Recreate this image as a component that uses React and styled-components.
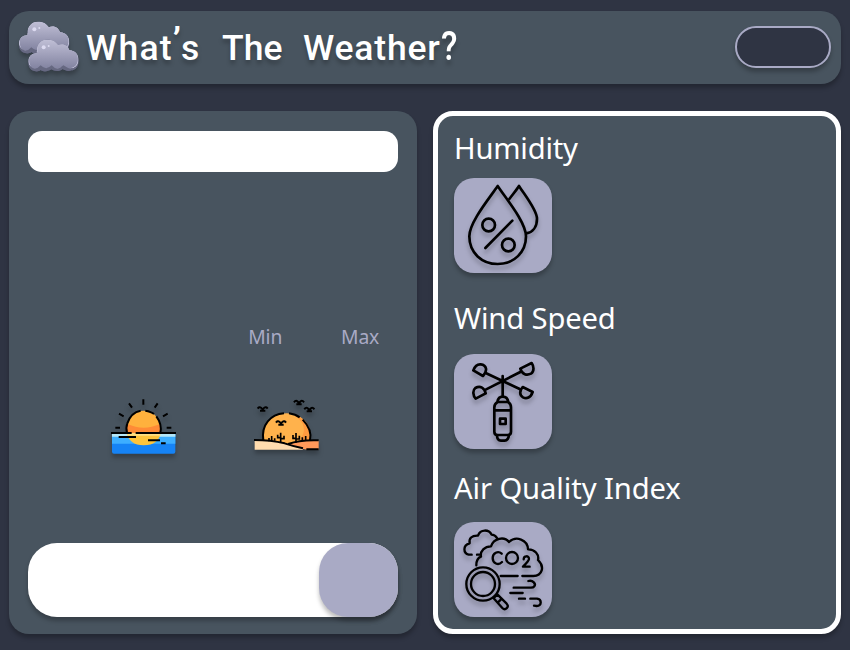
import React from "react";
import styled, { createGlobalStyle } from "styled-components";

const GlobalStyle = createGlobalStyle`
  * { box-sizing: border-box; }
  body { margin: 0; background: #2f3443; font-family: "Noto Sans", "Open Sans", sans-serif; }
`;

const Page = styled.div`
  width: 850px;
  height: 650px;
  padding: 11px 9px 16px;
  display: flex;
  flex-direction: column;
  gap: 27px;
  overflow: hidden;
`;

const Header = styled.header`
  height: 73px;
  flex: none;
  display: flex;
  align-items: center;
  padding: 0 10px 0 9px;
  border-radius: 20px;
  background: #48545f;
  box-shadow: 0 4px 4px rgba(0, 0, 0, 0.25);
`;

const Art = styled.svg`
  display: block;
  flex: none;
  overflow: visible;
  filter: drop-shadow(0 4px 2px rgba(0, 0, 0, 0.25));
`;

const Title = styled.h1`
  margin: 0 auto 0 6px;
  display: flex;
  gap: 20px;
  font: 500 35.5px/44px Roboto, "Liberation Sans", sans-serif;
  color: #fff;
  text-shadow: 0 4px 4px rgba(0, 0, 0, 0.25);
`;

const Word = styled.span`
  width: ${(p) => p.$width}px;
  letter-spacing: ${(p) => p.$spacing}px;
  white-space: nowrap;
`;

const Apostrophe = styled.span`
  vertical-align: 8px;
  line-height: 0;
  font-weight: 700;
  letter-spacing: 0;
`;

const QuestionMark = styled.span`
  display: inline-block;
  line-height: 1;
  transform: scale(0.95, 1.17);
  transform-origin: 0 82%;
`;

const Toggle = styled.button`
  width: 96px;
  height: 42px;
  margin-bottom: 1px;
  padding: 0;
  border: 2px solid #a9aac5;
  border-radius: 21px;
  background: #2f3443;
  box-shadow: 0 4px 4px rgba(0, 0, 0, 0.25);
`;

const Columns = styled.main`
  display: grid;
  grid-template-columns: 1fr 1fr;
  gap: 16px;
  height: 523px;
`;

const Panel = styled.section`
  display: flex;
  flex-direction: column;
  border-radius: 20px;
  background: #48545f;
  box-shadow: 0 4px 4px rgba(0, 0, 0, 0.25);
`;

const ForecastPanel = styled(Panel)`
  padding: 20px 19px 17px;
`;

const MetricsPanel = styled(Panel)`
  border: 5px solid #fff;
  padding: 12px 16px;
`;

const Place = styled.div`
  height: 41px;
  border-radius: 14px;
  background: #fff;
`;

const Range = styled.div`
  display: flex;
  justify-content: flex-end;
  gap: 59px;
  margin-top: 151px;
  padding-right: 19px;
  font-size: 19.3px;
  line-height: 28px;
  letter-spacing: -0.2px;
  color: #a9aac5;
`;

const SunTimes = styled.div`
  display: flex;
  gap: 78px;
  margin: 48px 0 auto 83px;
`;

const Search = styled.div`
  height: 74px;
  display: flex;
  justify-content: flex-end;
  border-radius: 29px;
  background: #fff;
  box-shadow: 0 4px 4px rgba(0, 0, 0, 0.25);
`;

const SearchButton = styled.button`
  width: 79px;
  border: 0;
  border-radius: 29px;
  background: #a9aac5;
  box-shadow: 0 4px 4px rgba(0, 0, 0, 0.25);
`;

const Metric = styled.div`
  height: ${(p) => p.$height}px;
  flex: none;
`;

const MetricName = styled.h2`
  margin: 0 0 ${(p) => p.$gap}px;
  font-size: 29.2px;
  line-height: 40px;
  font-weight: 400;
  letter-spacing: ${(p) => p.$spacing}px;
  color: #fff;
  white-space: nowrap;
`;

const Tile = styled.div`
  width: 98px;
  height: 95px;
  border-radius: 20px;
  background: #a9aac5;
  box-shadow: 0 4px 4px rgba(0, 0, 0, 0.25);
`;

const LineArt = styled(Art)`
  fill: none;
  stroke: #000;
  stroke-width: ${(p) => p.$weight || 8};
  stroke-linecap: round;
  stroke-linejoin: round;
`;

const CLOUD =
  "M75 160C62 158 56 145 57 130C58 115 70 106 83 107C79 84 94 66 114 66C130 66 140 73 146 83C162 76 176 84 180 98C198 99 208 111 208 129C208 146 199 157 186 158C176 162 168 158 160 154C150 162 138 162 126 155C112 164 100 162 94 157C88 162 81 162 75 160Z";

function Cloud({ id }) {
  return (
    <>
      <path d={CLOUD} fill="#5e607c" />
      <clipPath id={id}><path d={CLOUD} /></clipPath>
      <g clipPath={`url(#${id})`}>
        <path d={CLOUD} fill="#cfcee4" transform="translate(0 -6)" />
        <path d={CLOUD} fill="url(#cloudFill)" transform="translate(4 1) scale(.97 .95)" />
        <path d="M57 138Q76 164 94 143Q110 160 127 143Q143 162 162 143Q190 164 208 138V170H57Z" fill="#666881" />
      </g>
      <circle cx="103" cy="89" r="6" fill="#dcdaf0" />
      <circle cx="118" cy="85" r="3" fill="#dcdaf0" />
    </>
  );
}

function CloudsLogo() {
  return (
    <Art width="62" height="53" viewBox="54 64 186 159">
      <defs>
        <linearGradient id="cloudFill" gradientUnits="userSpaceOnUse" x1="0" y1="70" x2="0" y2="155">
          <stop stopColor="#bfbed5" />
          <stop offset="1" stopColor="#8586a3" />
        </linearGradient>
      </defs>
      <Cloud id="cloudBack" />
      <g transform="translate(28 54)"><Cloud id="cloudFront" /></g>
    </Art>
  );
}

function Sunrise() {
  return (
    <Art width="65" height="55" viewBox="33 28 195 165">
      <circle cx="131" cy="115" r="50" fill="#ff8b36" />
      <path d="M82 103A50 50 0 0 1 180 103Q155 114 131 114T82 103Z" fill="#ffb13d" />
      <path d="M36 131H226V186Q226 192 220 192H42Q36 192 36 186Z" fill="#1683f5" />
      <path d="M36 131H226V162H36Z" fill="#3daeff" />
      <path d="M36 131H226V141H36Z" fill="#b4e6f7" />
      <path d="M81 131H181Q177 166 131 167Q87 166 81 131Z" fill="#ffc43b" />
      <path d="M81 131H181V138H83Z" fill="#ffdf83" />
      <g fill="none" stroke="#000" strokeWidth="6">
        <path d="M81 130Q77 113 82 101C90 77 105 66 122 63M136 63Q154 66 162 73M169 80Q187 104 181 130" />
        <path d="M33 130H95M107 130H228M56 142H108M144 152H180M183 161H197M130 29V45M87 41L96 54M173 41L164 54M57 72L71 80M203 72L189 80M46 114H60M200 114H214" />
      </g>
    </Art>
  );
}

const BIRD = "M-15 -2Q-10 -9 -5 -5L0 0L5 -5Q10 -9 15 -2M-8 4H8";

function Sunset() {
  return (
    <Art width="65" height="54" viewBox="27 30 195 162">
      <path d="M55 165C48 108 77 73 125 73C173 73 202 110 195 165Z" fill="#ffb24c" />
      <path d="M145 77Q204 92 196 158H160Q200 112 145 77Z" fill="#ff9b3f" />
      <path d="M29 153Q77 153 119 163Q149 173 174 178V182H29Z" fill="#ffdcaf" />
      <path d="M130 167Q168 153 221 155V182H187Q157 178 130 167Z" fill="#ff9859" />
      <g fill="none" stroke="#000" strokeWidth="6">
        <path d="M55 154C48 108 77 76 117 73M132 73Q152 76 164 85M173 92Q202 122 195 153M27 153Q77 153 119 163Q149 173 174 178M130 165Q164 152 221 154M184 181H221" />
        <path d="M107 160V131M98 137V146H107M117 140V149H107M80 157V141M72 147V157M89 148V155M153 161V132M144 138V148H153M163 140V150H153M172 154V145M182 154V141" strokeWidth="5" />
        <path d={BIRD} transform="translate(53 61)" />
        <path d={BIRD} transform="translate(162 42)" />
        <path d={BIRD} transform="translate(193 63)" />
        <path d={BIRD} transform="translate(108 103)" />
      </g>
    </Art>
  );
}

function HumidityIcon() {
  return (
    <LineArt width="98" height="95" viewBox="27 174 294 285">
      <path d="M158 198C137 230 73 306 73 349C73 399 111 432 158 432C207 432 243 397 243 349C243 306 180 232 158 198Z" />
      <path d="M193 237C205 221 216 208 222 198C239 225 276 270 276 296C276 321 263 337 244 340" />
      <circle cx="131" cy="315" r="19" />
      <circle cx="190" cy="375" r="19" />
      <path d="M202 302L121 384" />
    </LineArt>
  );
}

function WindIcon() {
  return (
    <LineArt width="98" height="95" viewBox="27 192 294 285">
      <path d="M173 258V319M122 249L224 297M226 246L122 299" />
      <path d="M85 241L114 258C128 243 126 225 107 223C95 222 89 230 85 241ZM260 219L226 236C231 254 246 257 258 251C268 245 267 229 260 219ZM122 310L92 326C84 317 82 301 91 294C106 285 119 294 122 310ZM233 291L263 306C257 323 245 328 234 322C222 315 224 302 233 291Z" />
      <path d="M157 336C159 325 164 320 173 320C183 320 188 325 190 336M158 336H189Q198 341 198 352V425Q198 435 188 435H158Q148 435 148 425V352Q148 341 158 336ZM149 361H197M156 435C156 447 162 452 168 452H179Q190 451 192 435" />
      <rect x="165" y="386" width="17" height="16" />
    </LineArt>
  );
}

function AirIcon() {
  return (
    <LineArt width="98" height="95" viewBox="27 186 294 285" $weight={7}>
      <path d="M80 284H71C55 280 52 256 74 250C71 235 80 226 99 227C106 206 132 208 140 224Q149 224 157 235M96 284H105" />
      <path d="M94 316C94 303 100 293 108 290C105 273 119 259 138 259C146 234 178 228 192 246C213 226 248 239 249 268C269 267 283 284 279 300C300 320 292 347 265 348H232M167 348H218" />
      <path d="M170 281C159 271 143 279 143 294C143 310 160 318 171 306M236 298C236 286 252 286 252 297Q252 302 234 320H254" />
      <circle cx="201" cy="294" r="18" />
      <circle cx="114" cy="372" r="50" />
      <circle cx="114" cy="372" r="36" />
      <path d="M146 415L157 403L185 431C194 441 181 453 172 444ZM159 427L168 418" />
      <path d="M250 363C263 359 275 372 267 380Q265 383 258 383H206M196 399H233M222 416H240M256 416H276C291 418 291 437 275 438L267 437" />
    </LineArt>
  );
}

const METRICS = [
  { name: "Humidity", spacing: -0.2, height: 170, gap: 10, Icon: HumidityIcon },
  { name: "Wind Speed", spacing: -0.15, height: 170, gap: 16, Icon: WindIcon },
  { name: "Air Quality Index", spacing: -0.1, height: 145, gap: 14, Icon: AirIcon },
];

export default function App() {
  return (
    <>
      <GlobalStyle />
      <Page>
        <Header>
          <CloudsLogo />
          <Title>
            <Word $width={116} $spacing={1.2}>What<Apostrophe>’</Apostrophe>s</Word>
            <Word $width={61} $spacing={0.1}>The</Word>
            <Word $width={156} $spacing={0.8}>Weather<QuestionMark>?</QuestionMark></Word>
          </Title>
          <Toggle aria-label="Units" />
        </Header>
        <Columns>
          <ForecastPanel>
            <Place />
            <Range><span>Min</span><span>Max</span></Range>
            <SunTimes><Sunrise /><Sunset /></SunTimes>
            <Search><SearchButton aria-label="Search" /></Search>
          </ForecastPanel>
          <MetricsPanel>
            {METRICS.map(({ name, spacing, height, gap, Icon }) => (
              <Metric key={name} $height={height}>
                <MetricName $spacing={spacing} $gap={gap}>{name}</MetricName>
                <Tile><Icon /></Tile>
              </Metric>
            ))}
          </MetricsPanel>
        </Columns>
      </Page>
    </>
  );
}
